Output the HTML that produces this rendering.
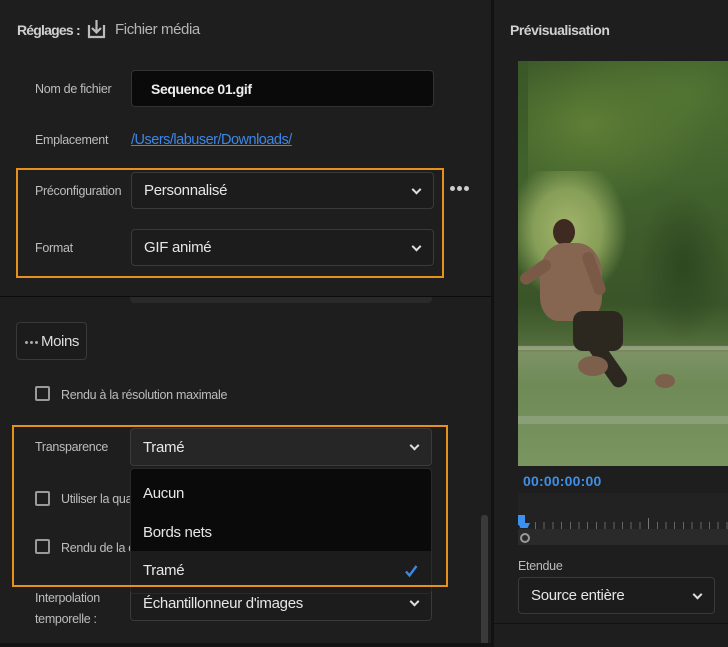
<!DOCTYPE html>
<html><head><meta charset="utf-8">
<style>
*{margin:0;padding:0;box-sizing:border-box}
body{width:728px;height:647px;background:#1e1e1e;font-family:"Liberation Sans",sans-serif;color:#c8c8c8;position:relative;overflow:hidden}
.a{position:absolute}
.lbl{font-size:12.5px;color:#bdbdbd;letter-spacing:-0.3px}
.sel{position:absolute;background:#1c1c1c;border:1px solid #3a3a3a;border-radius:4px;font-size:15px;color:#e6e6e6;padding-left:12px;display:flex;align-items:center;letter-spacing:-0.3px}
.chev{position:absolute;right:13px;top:50%;width:7px;height:7px;border-right:2px solid #ddd;border-bottom:2px solid #ddd;transform:translateY(-70%) rotate(45deg)}
.cb{position:absolute;width:15px;height:15px;border:2px solid #9a9a9a;border-radius:2px}
.or{position:absolute;border:2px solid #e8901e}
</style></head><body>
<div class="a" style="left:17px;top:22px;font-size:14px;font-weight:bold;color:#cfcfcf;letter-spacing:-0.8px">Réglages :</div>
<svg class="a" style="left:87px;top:19px" width="19" height="20" viewBox="0 0 19 20"><path d="M2 6V18H17V6" fill="none" stroke="#bbb" stroke-width="2.2"/><path d="M9.5 1V13M5 9l4.5 4.5L14 9" fill="none" stroke="#bbb" stroke-width="2.2"/></svg>
<div class="a" style="left:115px;top:21px;font-size:15px;color:#b5b5b5;letter-spacing:-0.4px">Fichier média</div>

<div class="a lbl" style="left:35px;top:82px">Nom de fichier</div>
<div class="a" style="left:131px;top:70px;width:303px;height:37px;background:#0a0a0a;border:1px solid #333;border-radius:4px;font-size:14px;font-weight:bold;color:#eee;padding:10px 0 0 19px;letter-spacing:-0.4px">Sequence 01.gif</div>

<div class="a lbl" style="left:35px;top:133px">Emplacement</div>
<div class="a" style="left:131px;top:132px;font-size:14.5px;color:#3d86e6;text-decoration:underline;letter-spacing:-0.5px">/Users/labuser/Downloads/</div>

<div class="a lbl" style="left:35px;top:184px">Préconfiguration</div>
<div class="sel" style="left:131px;top:172px;width:303px;height:37px">Personnalisé<span class="chev"></span></div>
<div class="a" style="left:450px;top:186px;display:flex;gap:2px"><i style="width:5px;height:5px;border-radius:50%;background:#ccc"></i><i style="width:5px;height:5px;border-radius:50%;background:#ccc"></i><i style="width:5px;height:5px;border-radius:50%;background:#ccc"></i></div>

<div class="a lbl" style="left:35px;top:241px">Format</div>
<div class="sel" style="left:131px;top:229px;width:303px;height:37px">GIF animé<span class="chev"></span></div>
<div class="or" style="left:16px;top:168px;width:428px;height:110px"></div>

<div class="a" style="left:0;top:296px;width:491px;height:1px;background:#0c0c0c"></div>
<div class="a" style="left:130px;top:297px;width:302px;height:6px;background:#2a2a2a;border-radius:0 0 4px 4px"></div>

<div class="a" style="left:16px;top:322px;width:71px;height:38px;border:1px solid #393939;border-radius:4px;background:#1c1c1c;font-size:15px;color:#ddd;padding:10px 0 0 8px;letter-spacing:-0.4px"><span style="display:inline-flex;gap:2px;vertical-align:middle;margin-right:3px"><i style="width:3px;height:3px;border-radius:50%;background:#aaa"></i><i style="width:3px;height:3px;border-radius:50%;background:#aaa"></i><i style="width:3px;height:3px;border-radius:50%;background:#aaa"></i></span>Moins</div>

<div class="cb" style="left:35px;top:386px"></div>
<div class="a lbl" style="left:61px;top:388px">Rendu à la résolution maximale</div>

<div class="a lbl" style="left:35px;top:440px">Transparence</div>
<div class="sel" style="left:130px;top:428px;width:302px;height:38px;background:#262626">Tramé<span class="chev"></span></div>

<div class="cb" style="left:35px;top:491px"></div>
<div class="a lbl" style="left:61px;top:492px">Utiliser la qual</div>
<div class="cb" style="left:35px;top:539px"></div>
<div class="a lbl" style="left:61px;top:541px">Rendu de la co</div>

<div class="a lbl" style="left:35px;top:588px;line-height:21px">Interpolation<br>temporelle :</div>
<div class="sel" style="left:130px;top:585px;width:302px;height:36px">Échantillonneur d'images<span class="chev"></span></div>

<div class="a" style="left:130px;top:468px;width:302px;height:126px;background:#0a0a0a;border:1px solid #2a2a2a;border-radius:4px;overflow:hidden;font-size:15px;color:#e6e6e6;letter-spacing:-0.3px">
<div class="a" style="left:12px;top:16px">Aucun</div>
<div class="a" style="left:12px;top:55px">Bords nets</div>
<div class="a" style="left:0;top:82px;width:302px;height:44px;background:#1c1c1c"></div>
<div class="a" style="left:12px;top:93px">Tramé</div>
<svg class="a" style="left:273px;top:95px" width="14" height="14" viewBox="0 0 14 14"><path d="M2 7.5l3.5 4L12.5 2" fill="none" stroke="#3d86e6" stroke-width="2.4"/></svg>
</div>
<div class="or" style="left:12px;top:425px;width:436px;height:162px"></div>

<div class="a" style="left:481px;top:515px;width:7px;height:132px;background:#3a3a3a;border-radius:3px"></div>
<div class="a" style="left:0;top:643px;width:491px;height:4px;background:#131313"></div>

<div class="a" style="left:491px;top:0;width:3px;height:647px;background:#121212"></div>

<div class="a" style="left:510px;top:22px;font-size:14px;font-weight:bold;color:#d0d0d0;letter-spacing:-0.5px">Prévisualisation</div>
<div class="a" style="left:518px;top:61px;width:210px;height:405px;overflow:hidden;background:linear-gradient(#3a5728 0%,#41622d 30%,#3a5529 60%,#526c3b 70%,#7d9264 72%,#6f8a57 80%,#7a9560 100%)">
  <div class="a" style="left:10px;top:0;width:200px;height:160px;background:radial-gradient(ellipse at 30% 40%,#5e7f36,transparent 60%),radial-gradient(ellipse at 80% 20%,#517433,transparent 55%)"></div>
  <div class="a" style="left:0;top:110px;width:110px;height:130px;background:radial-gradient(ellipse at 45% 45%,#a3b46c,#869e57 40%,transparent 70%)"></div>
  <div class="a" style="left:120px;top:130px;width:90px;height:150px;background:radial-gradient(ellipse,#2d4720,transparent 70%)"></div>
  <div class="a" style="left:0;top:285px;width:210px;height:4px;background:#a7ab90;opacity:.7"></div>
  <div class="a" style="left:0;top:355px;width:210px;height:8px;background:#9aa88a;opacity:.6"></div>
  <div class="a" style="left:35px;top:158px;width:22px;height:26px;border-radius:50%;background:#3e2a20"></div>
  <div class="a" style="left:22px;top:182px;width:62px;height:78px;border-radius:40% 40% 30% 30%;background:#866650"></div>
  <div class="a" style="left:0;top:205px;width:35px;height:12px;background:#7a5a46;transform:rotate(-35deg);border-radius:6px"></div>
  <div class="a" style="left:70px;top:190px;width:12px;height:45px;background:#7a5a46;transform:rotate(-20deg);border-radius:6px"></div>
  <div class="a" style="left:55px;top:250px;width:50px;height:40px;background:#2c2820;border-radius:10px"></div>
  <div class="a" style="left:80px;top:270px;width:16px;height:60px;background:#2c2820;transform:rotate(-35deg);border-radius:7px"></div>
  <div class="a" style="left:60px;top:295px;width:30px;height:20px;background:#7c604c;border-radius:50%"></div>
  <div class="a" style="left:137px;top:313px;width:20px;height:14px;background:#7c604c;border-radius:50%"></div>
</div>
<div class="a" style="left:523px;top:473px;font-size:14px;font-weight:bold;color:#3f8fe8;letter-spacing:0.2px">00:00:00:00</div>
<div class="a" style="left:518px;top:493px;width:210px;height:52px;background:#222"></div>
<div class="a" style="left:518px;top:529px;width:210px;height:16px;background:#2a2a2a"></div>
<div class="a" style="left:535px;top:522px;width:193px;height:7px;background:repeating-linear-gradient(90deg,#666 0 1px,transparent 1px 8.7px)"></div>
<div class="a" style="left:648px;top:518px;width:1px;height:11px;background:#777"></div>
<div class="a" style="left:518px;top:515px;width:7px;height:10px;background:#3d8ff0"></div>
<div class="a" style="left:518px;top:523px;width:12px;height:5px;background:#3d8ff0;clip-path:polygon(0 0,100% 0,80% 100%,20% 100%)"></div>
<div class="a" style="left:520px;top:533px;width:10px;height:10px;border:2px solid #999;border-radius:50%"></div>
<div class="a lbl" style="left:518px;top:559px;color:#bbb">Etendue</div>
<div class="sel" style="left:518px;top:577px;width:197px;height:37px">Source entière<span class="chev"></span></div>
<div class="a" style="left:494px;top:623px;width:234px;height:1px;background:#111"></div>
</body></html>
